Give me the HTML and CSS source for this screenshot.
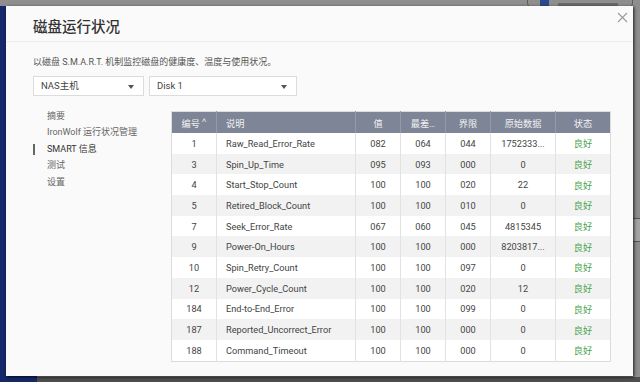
FILE: index.html
```html
<!DOCTYPE html>
<html lang="zh-CN">
<head>
<meta charset="UTF-8">
<meta name="viewport" content="width=device-width, initial-scale=1.0">
<title>磁盘运行状况</title>
<link rel="stylesheet" href="styles.css">
</head>
<body>

<div class="desktop">
    <div class="side-strip"></div>
    <div class="bottom-strip"></div>
    <div class="top-chip"><span class="chip-icon"></span><span class="chip-text"></span></div>
    <div class="right-tab"></div>
</div>

<div class="dialog">
    <div class="dialog-header">
        <h2>磁盘运行状况</h2>
        <span class="close">
            <svg width="11" height="11" viewBox="0 0 11 11"><path d="M1 1L10 10M10 1L1 10" stroke="#9a9a9a" stroke-width="1.1" fill="none"/></svg>
        </span>
    </div>

    <div class="dialog-body">
        <p class="intro">以磁盘 S.M.A.R.T. 机制监控磁盘的健康度、温度与使用状况。</p>
        <div class="pickers">
            <div class="picker picker-host">NAS主机<span class="arrow"></span></div>
            <div class="picker picker-disk">Disk 1<span class="arrow"></span></div>
        </div>

        <div class="content">
            <ul class="menu">
                <li>摘要</li>
                <li>IronWolf 运行状况管理</li>
                <li class="active">SMART 信息</li>
                <li>测试</li>
                <li>设置</li>
            </ul>

            <table class="smart">
                <thead>
                    <tr>
                        <th class="c-id">编号<span class="sort">˄</span></th>
                        <th class="c-name">说明</th>
                        <th class="c-num">值</th>
                        <th class="c-num">最差…</th>
                        <th class="c-num">界限</th>
                        <th class="c-raw">原始数据</th>
                        <th>状态</th>
                    </tr>
                </thead>
                <tbody>
                    <tr><td>1</td><td class="name">Raw_Read_Error_Rate</td><td>082</td><td>064</td><td>044</td><td>1752333...</td><td class="ok">良好</td></tr>
                    <tr><td>3</td><td class="name">Spin_Up_Time</td><td>095</td><td>093</td><td>000</td><td>0</td><td class="ok">良好</td></tr>
                    <tr><td>4</td><td class="name">Start_Stop_Count</td><td>100</td><td>100</td><td>020</td><td>22</td><td class="ok">良好</td></tr>
                    <tr><td>5</td><td class="name">Retired_Block_Count</td><td>100</td><td>100</td><td>010</td><td>0</td><td class="ok">良好</td></tr>
                    <tr><td>7</td><td class="name">Seek_Error_Rate</td><td>067</td><td>060</td><td>045</td><td>4815345</td><td class="ok">良好</td></tr>
                    <tr><td>9</td><td class="name">Power-On_Hours</td><td>100</td><td>100</td><td>000</td><td>8203817...</td><td class="ok">良好</td></tr>
                    <tr><td>10</td><td class="name">Spin_Retry_Count</td><td>100</td><td>100</td><td>097</td><td>0</td><td class="ok">良好</td></tr>
                    <tr><td>12</td><td class="name">Power_Cycle_Count</td><td>100</td><td>100</td><td>020</td><td>12</td><td class="ok">良好</td></tr>
                    <tr><td>184</td><td class="name">End-to-End_Error</td><td>100</td><td>100</td><td>099</td><td>0</td><td class="ok">良好</td></tr>
                    <tr><td>187</td><td class="name">Reported_Uncorrect_Error</td><td>100</td><td>100</td><td>000</td><td>0</td><td class="ok">良好</td></tr>
                    <tr><td>188</td><td class="name">Command_Timeout</td><td>100</td><td>100</td><td>000</td><td>0</td><td class="ok">良好</td></tr>
                </tbody>
            </table>
        </div>
    </div>
</div>

</body>
</html>
```

FILE: styles.css
```css
body {
    margin: 0;
    padding: 0;
    width: 640px;
    height: 382px;
    overflow: hidden;
    background-color: #8e8e8e;
    font-family: Roboto, "Noto Sans CJK SC", sans-serif;
}
.desktop {
    position: relative;
    width: 640px;
    height: 382px;
}
.side-strip {
    position: absolute;
    left: 0;
    top: 6px;
    width: 37px;
    height: 376px;
    background-color: #15296a;
}
.bottom-strip {
    position: absolute;
    left: 37px;
    top: 377px;
    width: 603px;
    height: 5px;
    background-color: #4e4e4e;
}
.top-chip {
    position: absolute;
    left: 527px;
    top: -6px;
    width: 106px;
    height: 14px;
    border: 1px solid #5c5c5c;
    border-radius: 5px;
    box-sizing: border-box;
}
.chip-icon {
    position: absolute;
    left: 12px;
    top: 5px;
    width: 9px;
    height: 7px;
    background-color: #2b4a8a;
}
.chip-text {
    position: absolute;
    left: 30px;
    top: 8px;
    width: 60px;
    height: 3px;
    background-color: #6a6a6a;
}
.right-tab {
    position: absolute;
    left: 633px;
    top: 218px;
    width: 7px;
    height: 22px;
    border-top: 1px solid #555;
    border-bottom: 1px solid #555;
    background-color: #a4a4a4;
}
.dialog {
    position: absolute;
    left: 6px;
    top: 6px;
    width: 627px;
    height: 370px;
    background-color: #fafafa;
    box-shadow: 1px 1px 3px rgba(0, 0, 0, 0.8);
}
.dialog-header {
    display: flex;
    align-items: center;
    justify-content: space-between;
    height: 36px;
    padding: 4px 5px 0 27px;
    box-sizing: border-box;
    border-bottom: 1px solid #ececec;
}
.dialog-header h2 {
    margin: 0;
    font-size: 14.5px;
    font-weight: 500;
    color: #333;
}
.close {
    display: flex;
    align-self: flex-start;
    margin-top: 2px;
}
.dialog-body {
    padding: 0 22px 0 27px;
}
.intro {
    margin: 13px 0 0;
    font-size: 9px;
    line-height: 14px;
    color: #555;
}
.pickers {
    display: flex;
    gap: 5px;
    margin-top: 7px;
}
.picker {
    position: relative;
    height: 18px;
    line-height: 18px;
    border: 1px solid #dcdcdc;
    background-color: #fff;
    font-size: 9.5px;
    color: #444;
    padding-left: 7px;
    box-sizing: content-box;
}
.picker-host {
    width: 102px;
}
.picker-disk {
    width: 139px;
}
.arrow {
    position: absolute;
    right: 9px;
    top: 8px;
    border-left: 3px solid transparent;
    border-right: 3px solid transparent;
    border-top: 4px solid #555;
}
.content {
    display: flex;
    margin-top: 15px;
}
.menu {
    list-style: none;
    margin: -3px 0 0;
    padding: 0;
    width: 138px;
}
.menu li {
    position: relative;
    font-size: 9px;
    line-height: 16.4px;
    color: #666;
    padding-left: 14px;
}
.menu li.active {
    color: #333;
}
.menu li.active::before {
    content: "";
    position: absolute;
    left: 0;
    top: 3px;
    width: 2px;
    height: 11px;
    background-color: #666;
}
.smart {
    width: 440px;
    border-collapse: collapse;
    table-layout: fixed;
    font-size: 9.2px;
    color: #444;
    border: 1px solid #dcdcdc;
}
.smart th {
    height: 21px;
    padding: 0;
    background-color: #7d8597;
    color: #f2f2f2;
    font-weight: normal;
    text-align: center;
    border-left: 1px solid #949aa8;
}
.smart th:first-child {
    border-left: none;
}
.smart th.c-id {
    width: 44px;
}
.smart th.c-name {
    width: 139px;
    text-align: left;
    padding-left: 9px;
    box-sizing: border-box;
}
.smart th.c-num {
    width: 44px;
}
.smart th.c-raw {
    width: 64px;
}
.sort {
    font-size: 8px;
    vertical-align: top;
    margin-left: 2px;
}
.smart td {
    height: 20.7px;
    padding: 0;
    text-align: center;
    border-left: 1px solid #e2e2e2;
    white-space: nowrap;
    overflow: hidden;
}
.smart td:first-child {
    border-left: none;
}
.smart td.name {
    text-align: left;
    padding-left: 9px;
}
.smart tbody tr {
    background-color: #fff;
}
.smart tbody tr:nth-child(even) {
    background-color: #f2f2f2;
}
.smart td.ok {
    color: #4ba44b;
}
```
